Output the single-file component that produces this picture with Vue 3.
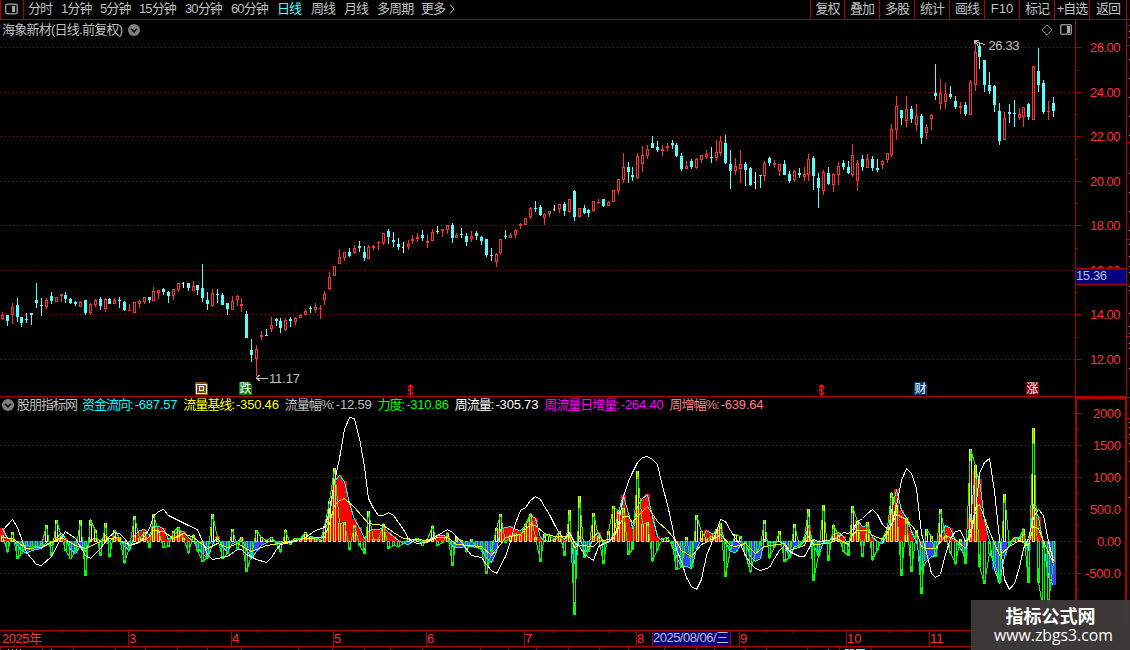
<template>
  <div class="terminal">
    <header class="toolbar">
      <div class="toolbar__toggle">
        <svg width="13" height="12" viewBox="0 0 13 12">
          <rect x="0.75" y="1.25" width="11.5" height="9.5" rx="1.5" fill="none" stroke="#8c8c8c" stroke-width="1.5" />
          <rect x="7" y="3" width="3" height="6" fill="#a8a8a8" />
        </svg>
      </div>
      <nav class="periods">
        <span
          v-for="p in periods"
          :key="p.label"
          class="periods__item"
          :class="{ 'periods__item--active': p.active }"
          :style="{ width: p.w + 'px' }"
        >{{ p.label }}</span>
        <svg class="periods__more" width="6" height="10" viewBox="0 0 6 10">
          <path d="M1 0.5L5 5L1 9.5" fill="none" stroke="#c0c0c0" />
        </svg>
      </nav>
      <div class="tools">
        <span v-for="t in tools" :key="t" class="tools__item">{{ t }}</span>
      </div>
    </header>

    <section class="panel panel--price">
      <div class="panel__head">
        <span class="panel__title">海象新材(日线.前复权)</span>
        <svg class="chevron" width="12" height="12" viewBox="0 0 12 12">
          <circle cx="6" cy="6" r="6" fill="#808080" />
          <path d="M3 4.8L6 7.8L9 4.8" fill="none" stroke="#000" stroke-width="1.6" />
        </svg>
        <div class="panel__icons">
          <svg width="12" height="12" viewBox="0 0 12 12">
            <path d="M6 1L11 6L6 11L1 6Z" fill="none" stroke="#8c8c8c" />
          </svg>
          <svg width="12" height="11" viewBox="0 0 12 11">
            <rect x="0.75" y="0.75" width="10.5" height="9.5" rx="1" fill="none" stroke="#8c8c8c" stroke-width="1.5" />
            <rect x="7" y="2" width="3" height="7" fill="#a8a8a8" />
          </svg>
        </div>
      </div>
      <svg class="chart" width="1130" height="357" viewBox="0 39 1130 357">
        <g class="grid">
          <line v-for="t in priceTicks" :key="t.y" x1="1" :y1="t.y + 0.5" x2="1075" :y2="t.y + 0.5" />
        </g>
        <g class="crisp">
          <g v-for="(c, i) in candles" :key="i" :fill="c.color">
            <rect :x="c.x" :y="c.high" width="1" :height="Math.max(c.top - c.high, 0)" />
            <template v-if="c.hollow">
              <rect :x="c.x - 1" :y="c.top" width="3" height="1" />
              <rect :x="c.x - 1" :y="c.bottom - 1" width="3" height="1" />
              <rect :x="c.x - 1" :y="c.top" width="1" :height="c.bottom - c.top" />
              <rect :x="c.x + 1" :y="c.top" width="1" :height="c.bottom - c.top" />
            </template>
            <rect v-else :x="c.x - 1" :y="c.top" :width="c.color === white ? 2 : 3" :height="c.bottom - c.top" />
            <rect :x="c.x" :y="c.bottom" width="1" :height="Math.max(c.low - c.bottom, 0)" />
          </g>
        </g>
        <g class="crisp" stroke="#c0c0c0" fill="none">
          <path d="M974.5 44V40.5H979 M975 41.5L985 44.5 M975 41L978 46" />
          <path d="M256 378.5H268 M256 378L260 375 M256 378L260 381" />
        </g>
        <text class="note" x="988.5" y="50" textLength="31">26.33</text>
        <text class="note" x="269" y="383" textLength="31">11.17</text>

        <g v-for="m in markers" :key="m.x">
          <path :d="`M${m.x} 382h11l2 2v11h-13z`" :fill="m.color" />
          <g v-if="m.label === '回'" class="crisp" fill="none" stroke="#fff">
            <text class="marker marker--hidden" :x="m.x + 6.5" y="393">{{ m.label }}</text>
            <rect :x="m.x + 1.5" y="384.5" width="10" height="9" />
            <rect :x="m.x + 4.5" y="386.5" width="4" height="4" />
          </g>
          <text v-else class="marker" :x="m.x + 6.5" y="393">{{ m.label }}</text>
        </g>
        <g v-for="x in dividends" :key="x" fill="none" stroke="#ff1010" stroke-width="1.2">
          <path :d="`M${x - 2} 387.5L${x + 0.5} 384.8L${x + 3} 387.5 M${x + 3} 389.6c-1-1-4.8-1-4.8 .6s4.8 1 4.8 2.8s-3.8 1.6-5 .4 M${x + 0.5} 385v11`" />
        </g>

        <g class="axis">
          <path d="M1075.5 20V397 M1126.5 20V397 M0 396.5H1127" />
          <path v-for="t in priceTicks" :key="t.y" :d="`M1076 ${t.y + 0.5}h5`" />
          <path v-for="y in priceMinor" :key="y" :d="`M1076 ${y + 0.5}h2`" />
          <path v-for="y in edgeTicks" :key="y" :d="`M1127 ${y + 0.5}h3`" />
        </g>
        <rect v-for="y in edgeDots" :key="y" class="crisp" x="1129" :y="y" width="1" height="1" fill="#c0c0c0" />
        <text v-for="t in priceTicks" :key="t.y" class="tick" x="1090" :y="t.y + 5" textLength="30.5">{{ t.label }}</text>
        <rect class="crisp" x="1076" y="269" width="50" height="15" fill="#000080" />
        <path class="axis" d="M1075 268.5h52 M1075 284.5h52" />
        <text class="note" x="1076" y="280" textLength="31">15.36</text>
      </svg>
    </section>

    <section class="panel panel--flow">
      <div class="panel__head panel__head--flow">
        <svg class="chevron" width="12" height="12" viewBox="0 0 12 12">
          <circle cx="6" cy="6" r="6" fill="#808080" />
          <path d="M3 4.8L6 7.8L9 4.8" fill="none" stroke="#000" stroke-width="1.6" />
        </svg>
        <span class="legend__name">股朋指标网</span>
        <span v-for="l in legend" :key="l.label" class="legend" :class="'legend--' + l.key">
          {{ l.label }}:<b class="legend__value">{{ l.value }}</b>
        </span>
      </div>
      <svg class="chart" width="1130" height="216" viewBox="0 414 1130 216">
        <g class="grid">
          <line v-for="y in [445, 477, 509, 541, 573]" :key="y" x1="1" :y1="y + 0.5" x2="1075" :y2="y + 0.5" />
        </g>
        <g class="crisp">
          <rect
            v-for="(b, i) in flowBars"
            :key="i"
            :x="b.x"
            :y="b.y"
            :width="b.w"
            :height="b.h"
            :fill="b.color"
          />
        </g>
        <g class="crisp lines">
          <polyline :points="toPoints(flow)" stroke="#00ffff" />
          <path v-for="(b, i) in forceBars" :key="i" :d="b.d" :stroke="b.color" />
          <polyline :points="toPoints(force)" stroke="#00ff00" />
          <polyline :points="keyPoints(base)" stroke="#ffff00" />
          <polyline :points="keyPoints(week)" stroke="#ffffff" />
        </g>
        <g class="axis">
          <path d="M1076 397V630 M1126 397V630 M1076 397.5H1126" stroke-width="2" />
          <path v-for="t in flowTicks" :key="t.y" :d="`M1077 ${t.y + 0.5}h4`" />
          <path v-for="y in [429, 461, 493, 525, 557, 589]" :key="y" :d="`M1077 ${y + 0.5}h2`" />
        </g>
        <text
          v-for="t in flowTicks"
          :key="t.y"
          class="tick"
          :x="1121 - t.w"
          :y="t.y + 5"
          :textLength="t.w"
        >{{ t.label }}</text>
      </svg>
    </section>

    <footer class="timeline">
      <svg class="chart" width="1130" height="20" viewBox="0 630 1130 20">
        <g class="axis">
          <path d="M0 630.5H1130 M0 646.5H1130 M0.5 646V650" />
          <path v-for="m in months" :key="m.x" :d="`M${m.x - 0.5} 630v17`" />
          <path v-for="x in dayTicks" :key="x" :d="`M${x + 0.5} 631v2`" />
          <path v-for="x in bottomTicks" :key="'b' + x" :d="`M${x + 0.5} 647v3`" />
        </g>
        <text class="tick" x="2" y="643" textLength="40">2025年</text>
        <text v-for="m in months" :key="m.x" class="tick" :x="m.x" y="643">{{ m.label }}</text>
        <rect class="crisp" x="653" y="631" width="77" height="15" fill="#000080" />
        <path class="axis" d="M652.5 630v17 M730.5 630v17" />
        <text class="note" x="653" y="642" textLength="76">2025/08/06/三</text>
        <g class="crisp" fill="#c0c0c0">
          <rect v-for="x in [8, 12, 16, 20, 51, 828]" :key="x" :x="x" y="649" width="1" height="1" />
          <path d="M845 649h4v1h-4z M850 649h4v1h-4z M856 649h9v1h-9z" fill="#54ffff" />
        </g>
      </svg>
    </footer>

    <div class="watermark">
      <div class="watermark__name">指标公式网</div>
      <div class="watermark__url">www.zbgs3.com</div>
    </div>
  </div>
</template>

<script setup>
import { computed } from 'vue'

const red = '#ff3232'
const cyan = '#54ffff'
const white = '#ffffff'

const periods = [
  { label: '分时', w: 33 },
  { label: '1分钟', w: 39 },
  { label: '5分钟', w: 39 },
  { label: '15分钟', w: 46 },
  { label: '30分钟', w: 46 },
  { label: '60分钟', w: 46 },
  { label: '日线', w: 34, active: true },
  { label: '周线', w: 33 },
  { label: '月线', w: 33 },
  { label: '多周期', w: 44 },
  { label: '更多', w: 28 },
]
const tools = ['复权', '叠加', '多股', '统计', '画线', 'F10', '标记', '+自选', '返回']

const legend = [
  { key: 'flow', label: '资金流向', value: '-687.57' },
  { key: 'base', label: '流量基线', value: '-350.46' },
  { key: 'pct', label: '流量幅%', value: '-12.59' },
  { key: 'force', label: '力度', value: '-310.86' },
  { key: 'week', label: '周流量', value: '-305.73' },
  { key: 'inc', label: '周流量日增量', value: '-264.40' },
  { key: 'weekpct', label: '周增幅%', value: '-639.64' },
]

const priceTicks = [
  { y: 47, label: '26.00' },
  { y: 92, label: '24.00' },
  { y: 136, label: '22.00' },
  { y: 181, label: '20.00' },
  { y: 225, label: '18.00' },
  { y: 270, label: '16.00' },
  { y: 314, label: '14.00' },
  { y: 359, label: '12.00' },
]
const priceMinor = [70, 114, 159, 203, 248, 292, 337]
const edgeTicks = [25, 45, 142, 239, 336, 397, 418, 437]
const edgeDots = [31, 37, 59, 78, 97, 116, 135, 173, 192, 211, 230, 244, 256, 266, 272, 286, 290, 313, 326, 333, 343, 348, 368, 422, 427, 434, 443, 461, 497]
const flowTicks = [
  { y: 413, label: '2000', w: 28 },
  { y: 445, label: '1500', w: 28 },
  { y: 477, label: '1000', w: 28 },
  { y: 509, label: '500.0', w: 31 },
  { y: 541, label: '0.00', w: 24 },
  { y: 573, label: '-500.0', w: 36 },
]

const markers = [
  { x: 195, label: '回', color: '#8c4600' },
  { x: 239, label: '跌', color: '#008000' },
  { x: 914, label: '财', color: '#003c6e' },
  { x: 1026, label: '涨', color: '#800000' },
]
const dividends = [410, 821]

const months = [
  { x: 129, label: '3' },
  { x: 232, label: '4' },
  { x: 334, label: '5' },
  { x: 427, label: '6' },
  { x: 525, label: '7' },
  { x: 637, label: '8' },
  { x: 740, label: '9' },
  { x: 847, label: '10' },
  { x: 930, label: '11' },
]
const dayTicks = [62, 84, 106, 154, 180, 205, 257, 282, 308, 356, 381, 404, 451, 475, 501, 552, 580, 608, 766, 793, 819, 867, 888, 908, 954]
const bottomTicks = [42, 73, 115, 145, 177, 207, 241, 298, 332, 364, 390, 422, 480, 508, 536, 568, 599, 628, 664, 696, 714, 745, 766, 807, 839, 871]

const STEP = 4.888
const ZERO = 541
const xAt = i => Math.round(1.88 + i * STEP)

// type high top bottom low
const rawCandles = `
r312,315,319,320 c315,315,321,326 r303,307,315,324 c298,305,317,322 c317,317,323,327 c313,319,320,323
c313,313,315,325 c283,300,303,308 c298,305,306,316 r298,300,307,309 c292,296,301,304 r297,297,302,302
r294,294,296,302 c292,295,299,303 c298,299,303,304 c301,302,304,306 r301,302,307,307 c300,300,313,315
r303,304,313,315 r299,300,305,307 c297,299,306,310 r298,299,309,312 c298,299,304,304 r298,300,304,304
c297,300,301,308 c301,302,310,311 r304,310,311,311 r302,302,313,313 r300,301,304,308 r297,297,302,304
c297,297,300,303 r287,291,301,301 r290,290,293,299 c288,289,292,295 c291,292,296,303 r289,289,296,300
r283,283,290,292 w282,283,284,288 c283,283,288,291 r281,286,291,291 c285,285,290,295 c264,288,298,302
c292,300,304,310 r289,293,306,307 c289,294,295,303 c293,295,305,305 c303,303,309,315 r296,301,310,310
r295,296,300,306 r298,304,306,312 c311,314,338,338 c339,350,355,362 r345,349,359,376 r331,335,337,340
c329,335,336,336 r317,325,329,332 c318,319,321,326 c318,321,328,333 r318,320,330,331 c317,319,321,327
r317,318,322,325 r314,315,318,318 r309,311,315,315 c306,308,309,313 r303,307,310,313 r305,308,309,319
r291,294,300,305 r272,277,289,290 r266,266,276,276 r249,257,264,264 r252,252,258,261 c248,252,256,257
r245,248,253,254 c241,246,248,252 c246,252,258,261 r245,247,259,259 r245,246,248,250 r241,242,243,250
r233,233,243,245 c229,231,237,244 c232,240,242,247 c238,244,247,250 w242,247,248,253 r240,244,247,250
r235,239,241,244 r233,237,239,242 c230,235,238,241 r235,241,243,248 r229,232,241,241 c226,231,232,234
r229,229,231,237 r225,225,230,234 c223,225,238,243 r233,235,238,238 c228,234,235,238 c233,236,242,246
r231,236,239,242 c231,233,236,240 c236,237,241,245 c239,239,255,257 c248,255,256,261 r253,254,262,267
r239,239,253,255 c230,236,237,239 r233,235,238,238 r229,230,235,238 r223,224,226,229 r218,218,225,225
r207,208,217,219 c201,208,209,212 c205,207,215,216 r213,214,218,225 r211,211,214,217 w205,209,210,211
r204,204,209,213 c202,204,211,216 r199,199,212,213 c190,191,217,221 r208,208,217,217 c205,208,213,214
c209,210,213,217 r201,201,211,212 r199,202,203,204 c199,199,206,207 r201,202,206,206 r190,190,202,202
r179,179,191,194 r153,167,180,183 c162,167,172,183 c167,175,177,181 r153,156,178,179 r146,155,164,172
r145,149,156,159 c136,143,148,148 c141,147,150,152 r145,149,151,156 r143,146,148,151 c140,143,145,149
c143,145,156,157 c153,156,169,171 r161,166,169,169 c159,161,167,169 r158,159,168,169 r155,155,160,163
r150,154,157,159 c147,157,158,163 r140,152,158,161 r136,141,153,156 c135,143,163,164 c150,164,171,189
r158,166,171,175 r150,164,169,183 c162,164,170,186 c167,168,185,186 w172,182,183,189 c175,175,176,188
r161,163,176,181 c157,158,163,166 r160,163,165,168 r164,164,171,176 c160,164,175,175 c171,174,181,183
r170,171,180,182 c168,173,175,178 r167,174,177,181 r154,159,175,181 c156,158,176,190 c173,178,188,208
r170,172,191,195 c167,173,184,185 r173,174,185,192 r162,166,175,185 c160,163,167,170 c161,167,173,174
r144,155,175,177 r160,163,181,191 c155,159,167,171 r154,159,168,168 c156,159,168,171 c159,168,170,172
r160,161,165,169 r153,153,160,163 r124,129,155,157 r96,106,130,140 c110,110,118,125 r96,109,121,127
c106,109,119,123 r104,116,125,131 c114,116,138,144 r124,127,133,139 r114,115,119,130 c64,93,96,100
r79,93,104,110 r83,94,102,109 c86,94,97,99 c96,101,107,109 r102,106,108,114 c102,105,114,116
r80,82,115,115 r42,52,85,91 c43,46,57,69 c60,60,85,92 c72,85,91,94 c85,86,105,112
c103,111,141,145 r112,118,140,140 c104,112,114,123 c100,113,114,127 r108,114,118,120 r107,107,117,127
c103,104,117,120 r66,66,120,120 c48,71,85,92 c80,83,112,114 r101,111,112,120 c97,103,111,117`

const candles = computed(() => rawCandles.trim().split(/\s+/).map((s, i) => {
  const [high, top, bottom, low] = s.slice(1).split(',').map(Number)
  const color = { r: red, c: cyan, w: white }[s[0]]
  return { x: xAt(i), high, top, bottom, low, color, hollow: s[0] === 'r' && bottom - top > 2 }
}))

// heights above the zero line, one per bar
const force = [
  6, -10, 9, -17, -12, -4, -5, -5, -4, 16, -14, 21, 5, -9, -17, -10, 21, -34, 21, 11, -14, 18, -15, 11, 4, -21, -6, 25, 3, 9,
  -6, 27, 10, -6, -5, 10, 14, 3, -11, 6, -9, -20, -16, 27, 4, -17, -12, 12, -7, 4, -30, -14, 11, 4, 1, 4, -2, -10, 11, -3,
  3, 3, 9, 4, 3, 1, 15, 40, 73, 18, 19, -8, 16, -4, -12, 30, 2, 2, 17, -7, -4, -5, -2, 2, 2, 3, -4, 2, 15, -4,
  -1, 8, -24, 4, 1, -10, 2, -6, -8, -32, -10, 13, 27, -1, 6, 8, 6, 17, 27, 4, -20, 7, 5, 3, 10, -14, 31, -73, 45, -16,
  -10, 28, 5, -22, 10, 35, 30, 33, -13, -8, 70, 17, 19, -19, -8, 3, 4, -5, -28, -26, 4, -25, 26, 10, 2, 5, 12, 18, -35, -8,
  7, 5, -14, -30, -12, -4, 21, -16, -5, 10, -20, -16, 17, -5, 4, 32, -39, -14, 36, -19, 16, 6, -10, -14, 35, 20, -15, 19, -18, -8,
  3, 14, 48, 36, -34, 23, -30, 11, -52, 12, 5, -15, 32, 5, -11, -22, 2, -22, 92, 76, -25, -42, -12, -20, -41, 47, -4, 3, 4, 12,
  -41, 113, -41, -70, -62, -20,
]
const flow = [
  13, 3, 3, -4, -9, -12, -9, -8, -7, -1, -4, 4, 8, 3, -8, -12, -4, -10, 2, 3, 1, 6, 0, 5, 3, -5, -9, 6, 11, 12,
  6, 15, 15, 13, 2, 6, 11, 10, 4, 0, -6, -12, -17, -3, 5, -6, -10, -2, 0, 3, -8, -17, -10, -4, -1, 1, -1, -2, 0, 0,
  3, 3, 7, 5, 4, 2, 8, 25, 60, 66, 60, 38, 22, 14, 3, 10, 12, 12, 14, 9, 5, 1, -2, -3, 0, 2, 0, 0, 4, 6,
  6, 5, -5, -6, -6, -4, -5, -6, -7, -17, -21, -10, 12, 14, 15, 12, 11, 15, 26, 23, 4, 1, 0, 2, 5, 3, 9, -22, 5, -10,
  -9, 5, 9, -1, -1, 6, 30, 46, 28, 14, 35, 43, 47, 25, 5, 0, 0, -1, -15, -26, -25, -27, -8, 3, 11, 8, 8, 14, -1, -10,
  -11, -4, -1, -15, -20, -17, 2, -1, -1, 0, -3, -15, -5, -4, 0, 16, -3, -14, -1, -1, 7, 9, 5, -4, 7, 21, 15, 16, 4, 0,
  -2, 8, 30, 52, 31, 24, 10, 0, -28, -20, -15, -14, 6, 16, 13, 1, -7, -16, 23, 70, 62, 22, 0, -28, -41, -15, -2, 4, 3, 7,
  -9, 37, 24, -3, -35, -44,
]

// [bar index, height] pairs
const base = [
  [0, 4], [2, 3], [5, -7], [8, -6], [12, 4], [15, -4], [17, -7], [20, 0], [23, 4], [26, -4], [30, 4], [31, 11], [33, 10],
  [35, 3], [37, 8], [39, 4], [42, -7], [44, -2], [46, -6], [48, -2], [51, -10], [54, -4], [58, -1], [62, 3], [66, 4],
  [67, 18], [68, 36], [69, 41], [70, 43], [72, 34], [75, 18], [78, 16], [80, 9], [82, 3], [87, 1], [89, 4], [91, 4],
  [93, -3], [98, -5], [100, -14], [102, -3], [103, 4], [106, 7], [108, 17], [109, 16], [111, 8], [113, 5], [116, 5],
  [117, -6], [118, -4], [121, -5], [122, 0], [125, 3], [127, 25], [128, 25], [129, 19], [130, 25], [132, 35], [134, 20],
  [136, 11], [138, 0], [139, -9], [141, -15], [143, -3], [146, 4], [147, 7], [149, -4], [150, -5], [152, -2], [154, -12],
  [156, -5], [160, -2], [161, -9], [164, -4], [165, 5], [166, -3], [169, -2], [171, 2], [173, -3], [174, 7], [175, 11],
  [177, 11], [178, 6], [180, 2], [182, 16], [183, 27], [185, 22], [187, 10], [188, -5], [189, -7], [191, -7], [193, 6],
  [195, 2], [197, -7], [198, 10], [199, 33], [200, 37], [202, 10], [204, -14], [206, -5], [208, 1], [210, -4], [211, 15],
  [212, 13], [213, 0], [215, -22],
]
const week = [
  [0, 11], [2, 22], [3, 14], [5, -11], [7, -23], [8, -24], [10, -15], [12, 4], [13, 10], [15, 3], [17, -14], [18, -17],
  [20, -7], [22, 5], [23, 9], [24, 8], [25, 3], [26, -4], [28, -1], [29, 5], [30, 13], [31, 25], [32, 30], [33, 32],
  [34, 26], [36, 21], [38, 16], [40, 12], [41, 0], [42, -13], [43, -18], [46, -15], [48, -8], [49, -8], [50, -13],
  [52, -18], [54, -21], [55, -16], [56, -8], [57, -3], [59, -1], [62, 4], [64, 11], [66, 14], [67, 30], [68, 60],
  [69, 83], [70, 112], [71, 124], [72, 123], [73, 103], [74, 75], [75, 43], [76, 33], [77, 26], [78, 26], [79, 29],
  [80, 26], [81, 19], [82, 12], [83, 3], [84, 0], [85, -2], [87, -1], [88, 3], [90, 9], [91, 12], [92, 9], [94, -1],
  [96, -14], [98, -16], [99, -23], [100, -29], [101, -32], [103, -15], [104, 0], [105, 18], [106, 31], [107, 34],
  [108, 41], [109, 45], [110, 42], [111, 35], [112, 27], [113, 17], [114, 8], [115, 2], [116, 9], [117, -1], [118, -5],
  [119, -13], [121, -19], [122, -5], [124, 0], [125, 3], [126, 18], [127, 45], [128, 60], [129, 69], [130, 79], [131, 84],
  [132, 85], [133, 82], [134, 77], [135, 55], [136, 37], [137, 14], [138, -8], [139, -20], [140, -36], [141, -45],
  [142, -48], [143, -38], [144, -14], [145, -2], [146, 10], [147, 22], [148, 20], [149, 11], [150, 3], [151, -3],
  [152, -14], [153, -22], [154, -27], [155, -29], [157, -26], [158, -17], [159, -9], [160, -4], [161, -10], [163, -15],
  [164, -15], [165, -8], [166, 2], [167, 0], [169, 1], [171, 4], [172, 9], [173, 8], [174, 12], [175, 20], [176, 23],
  [177, 28], [178, 32], [179, 27], [180, 17], [181, 12], [182, 16], [183, 36], [184, 61], [185, 73], [186, 68], [187, 53],
  [188, 8], [189, -11], [190, -32], [191, -36], [192, -33], [193, -13], [194, 3], [195, 10], [196, 11], [197, 0], [198, 5],
  [199, 30], [200, 68], [201, 79], [202, 83], [203, 50], [204, 3], [205, -38], [206, -48], [207, -42], [208, -26],
  [209, -7], [210, 3], [211, 24], [212, 32], [213, 26], [214, 0], [215, -20],
]

const flowBars = computed(() => flow.map((v, i) => ({
  x: xAt(i) - 2,
  y: v > 0 ? ZERO - v : ZERO,
  w: xAt(i + 1) - xAt(i),
  h: Math.abs(v),
  color: v > 0 ? '#ff0000' : '#4040ff',
})))

const forceBars = computed(() => force.map((v, i) => {
  const x = xAt(i)
  const y = ZERO + 0.5 - v
  return { d: `M${x - 0.5} ${ZERO + 0.5}V${y}H${x + 1.5}V${ZERO + 0.5}Z`, color: v > 0 ? '#ffff00' : '#00ff00' }
}))

const toPoints = arr => arr.map((v, i) => `${xAt(i) + 0.5},${ZERO + 0.5 - v}`).join(' ')
const keyPoints = arr => arr.map(([i, v]) => `${xAt(i) + 0.5},${ZERO + 0.5 - v}`).join(' ')
</script>

<style>
body {
  background: #000;
  overflow: hidden;
}
</style>

<style scoped>
.terminal {
  position: relative;
  width: 1130px;
  height: 650px;
  overflow: hidden;
  background: #000;
  color: #c0c0c0;
  font-family: "Liberation Sans", "Noto Sans CJK SC", sans-serif;
  font-size: 13px;
  line-height: 18px;
}

.toolbar {
  box-sizing: border-box;
  display: flex;
  height: 20px;
  border-bottom: 1px solid #b00000;
}

.toolbar__toggle {
  box-sizing: border-box;
  width: 24px;
  padding: 3px 0 0 4px;
  border-left: 1px solid #b00000;
  border-right: 1px solid #b00000;
}

.toolbar__toggle svg {
  display: block;
}

.periods {
  display: flex;
  flex: 1;
  padding-left: 4px;
  letter-spacing: -0.9px;
}

.periods__item {
  white-space: nowrap;
}

.periods__item--active {
  color: #54ffff;
}

.periods__more {
  margin-top: 4px;
}

.tools {
  display: flex;
  width: 317px;
  margin-right: 3px;
  border-right: 1px solid #b00000;
  box-sizing: border-box;
}

.tools__item {
  box-sizing: border-box;
  width: 35px;
  border-left: 1px solid #b00000;
  letter-spacing: -1px;
  text-align: center;
  white-space: nowrap;
}

.tools__item:first-child {
  width: 34px;
}

.tools__item:last-child {
  flex: 1;
}

.tools__item:nth-child(6) {
  letter-spacing: 0;
}

.panel__head {
  display: flex;
  align-items: center;
  height: 19px;
  padding-left: 2px;
}

.panel__title {
  letter-spacing: -0.75px;
}

.panel--price .chevron {
  margin-left: 6px;
}

.panel__icons {
  display: flex;
  gap: 7px;
  margin-left: auto;
  padding-right: 58px;
}

.panel__head--flow {
  height: 18px;
}

.legend__name {
  margin: 0 5px 0 3px;
  letter-spacing: -1px;
}

.legend {
  margin-right: 6px;
  letter-spacing: -1px;
  white-space: nowrap;
}

.legend__value {
  margin-left: 2px;
  font-weight: normal;
  letter-spacing: -0.2px;
}

.legend--flow { color: #00ffff; }
.legend--base { color: #ffff00; }
.legend--pct { color: #c0c0c0; }
.legend--force { color: #00ff00; }
.legend--week { color: #ffffff; }
.legend--inc { color: #ff00ff; }
.legend--weekpct { color: #ff8080; }

.chart {
  display: block;
  overflow: visible;
}

.crisp,
.grid,
.axis {
  shape-rendering: crispEdges;
}

.grid line {
  stroke: #b00000;
  stroke-dasharray: 1 3;
}

.axis {
  fill: none;
  stroke: #b00000;
}

.lines {
  fill: none;
}

.tick {
  fill: #ff3232;
}

.note {
  fill: #c0c0c0;
}

.marker {
  fill: #fff;
  font-size: 12px;
  text-anchor: middle;
}

.marker--hidden {
  display: none;
}

.watermark {
  position: absolute;
  right: 0;
  bottom: 0;
  box-sizing: border-box;
  width: 159px;
  height: 50px;
  padding-top: 4px;
  background: rgba(61, 57, 57, 0.98);
  color: #fff;
  text-align: center;
}

.watermark__name {
  font-family: "Noto Sans CJK SC", sans-serif;
  font-size: 18px;
  font-weight: bold;
  line-height: 22px;
}

.watermark__url {
  padding-left: 6px;
  font-family: "Open Sans", sans-serif;
  font-size: 15.8px;
  line-height: 19px;
}
</style>
